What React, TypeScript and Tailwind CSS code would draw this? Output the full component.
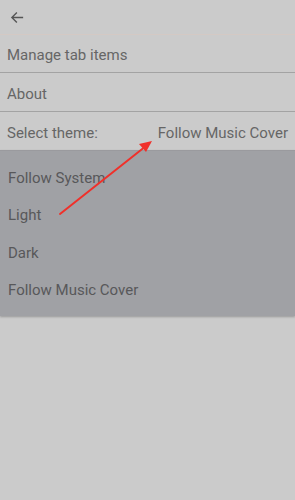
import React from 'react';

const themes = ['Follow System', 'Light', 'Dark', 'Follow Music Cover'];

const App: React.FC = () => {
    return (
        <div
            className="relative w-[295px] h-[500px] bg-[#cbcbcb] text-[#666] overflow-hidden"
            style={{ fontFamily: 'Roboto, "Noto Sans", sans-serif' }}
        >
            {/* Header */}
            <div className="h-[35px] flex items-center pl-[10px] border-b border-[#d4c9c4]">
                <svg width="15" height="15" viewBox="0 0 24 24" fill="none" stroke="#555" strokeWidth="2.2">
                    <path d="M21 12H4M11 4l-8 8 8 8" />
                </svg>
            </div>

            {/* Settings rows */}
            <div className="h-[38px] flex items-center pt-[4px] px-[7px] text-[15px] border-b border-[#a3a3a3]">
                Manage tab items
            </div>
            <div className="h-[39px] flex items-center pt-[5px] px-[7px] text-[15px] border-b border-[#a3a3a3]">
                About
            </div>
            <div className="h-[38px] flex items-center justify-between pt-[4px] px-[7px] text-[15px]">
                <span>Select theme:</span>
                <span>Follow Music Cover</span>
            </div>

            {/* Dropdown */}
            <div className="bg-[#a0a1a5] pt-[8px] pb-[7px] shadow-[0_1px_2px_rgba(0,0,0,0.25)] border-t border-[#9a9a9e]">
                {themes.map((t) => (
                    <div key={t} className="h-[37.5px] flex items-center px-[8px] text-[15px] text-[#58585a]">
                        {t}
                    </div>
                ))}
            </div>

            {/* Annotation arrow */}
            <svg className="absolute left-0 top-0" width="295" height="500">
                <line x1="60" y1="214" x2="146" y2="146" stroke="#f0302a" strokeWidth="2" strokeLinecap="round" />
                <polygon points="152,141 139,144 146,152" fill="#f0302a" />
            </svg>
        </div>
    );
};

export default App;
